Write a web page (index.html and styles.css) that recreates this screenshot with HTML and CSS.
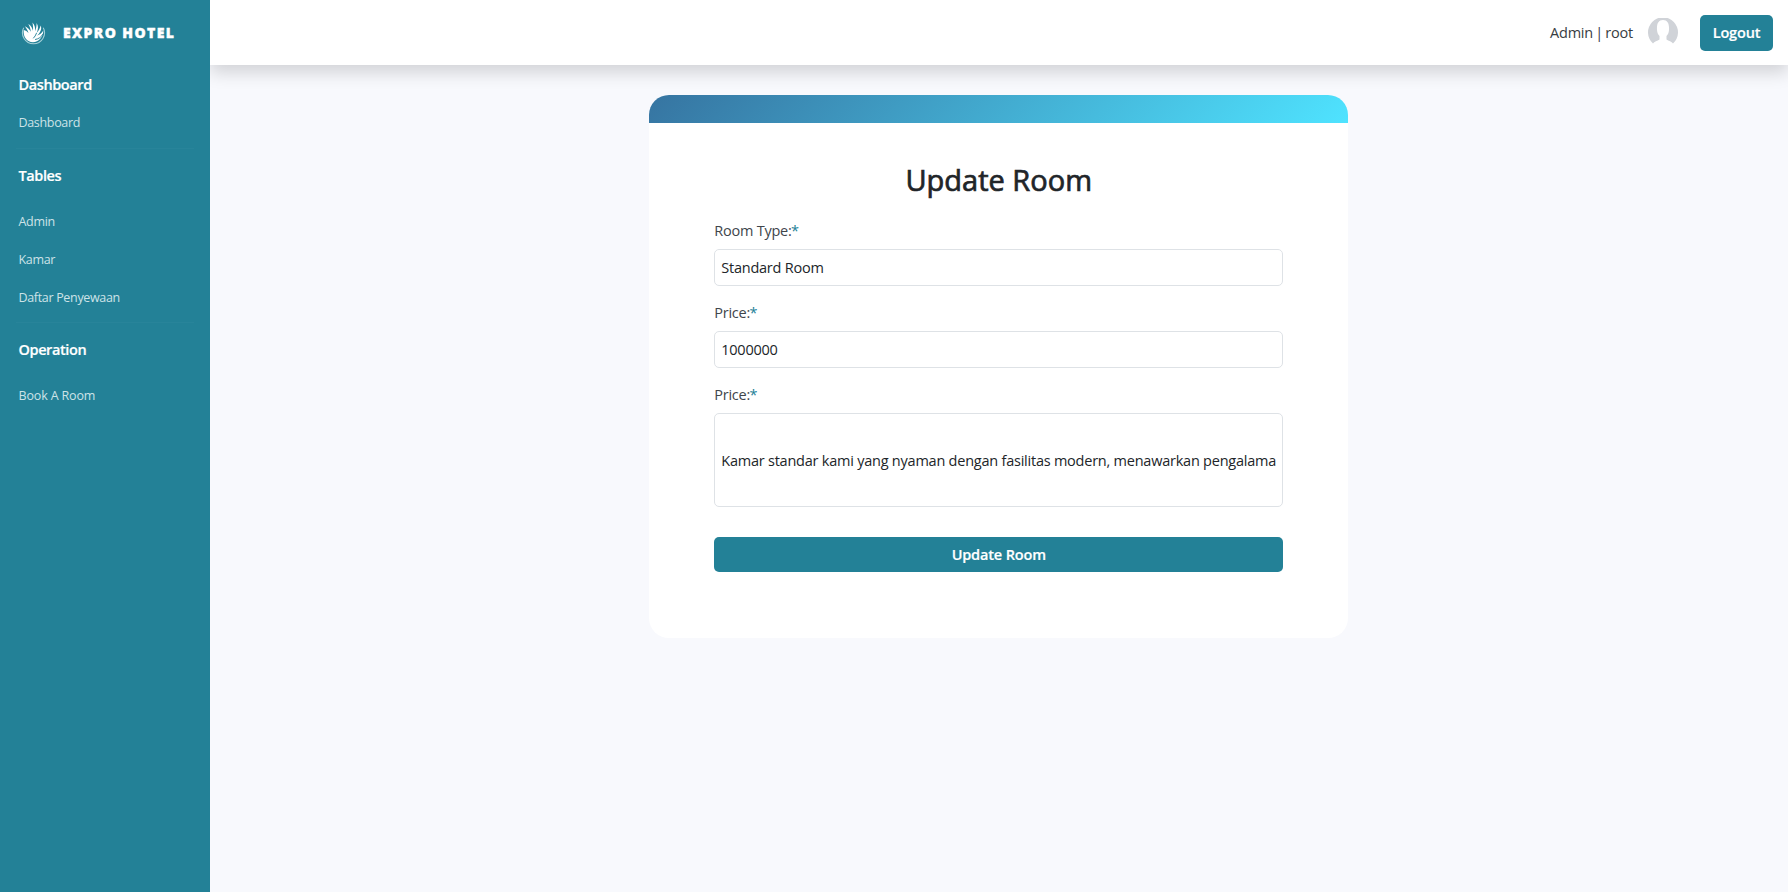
FILE: index.html
```html
<!DOCTYPE html>
<html lang="id">
<head>
<meta charset="utf-8">
<title>Expro Hotel</title>
<link rel="stylesheet" href="styles.css">
</head>
<body>
<aside class="sidebar">
  <div class="brand">
    <svg class="logo" viewBox="0 0 24 24" fill="#fff">
      <path d="M2.600 6.400A10.600 10.600 0 1 0 21.400 6.400" fill="none" stroke="#a5d0d8" stroke-width="1"/>
      <path d="M2.600 8.600C4.500 9 6 10 7.200 11.400C6.400 9 5.200 7 3.600 5C6.200 5.800 8.200 8 9.400 10.400C9.200 7.400 8.400 5 7 2.800C9.600 4.200 11 7 11.500 9.400C11.700 6.400 11.500 4 11 1.400C13.300 3.600 13.900 7 13.500 9.800C14.600 7.200 15 5 15 2C16.900 5 16.600 8.200 15 11.200C17 9.200 18.200 7 18.900 4.200C20.300 7.600 18.600 11 15.200 14.200C18 13.200 20 11.600 21.400 9.200C21.400 15.600 17 20.400 11.400 20.400C6 20.400 1.800 15.400 2.600 8.600Z"/>
      <path d="M21.500 12C19.600 15.400 17 17.200 13.500 17.800" fill="none" stroke="#238197" stroke-width=".9"/>
      <path d="M15 11.400C14.200 13.600 13.200 15.200 11.800 16.600" fill="none" stroke="#238197" stroke-width=".9"/>
    </svg>
    <span class="brand-name">EXPRO HOTEL</span>
  </div>
  <nav class="menu">
    <section class="group first">
      <h2>Dashboard</h2>
      <a>Dashboard</a>
    </section>
    <section class="group">
      <h2>Tables</h2>
      <a>Admin</a>
      <a>Kamar</a>
      <a>Daftar Penyewaan</a>
    </section>
    <section class="group">
      <h2>Operation</h2>
      <a class="wide">Book A Room</a>
    </section>
  </nav>
</aside>
<div class="page">
  <header class="topbar">
    <span class="user">Admin | root</span>
    <svg class="avatar" viewBox="0 0 30 26" fill="#d0d3d8">
      <path d="M5 25.500A15 15 0 1 1 25 25.500C23.800 23.600 20.500 22.800 18.500 21.500V18C20 16.500 20.800 14.500 21 12C21.400 5.500 19.500 2 15 2S8.600 5.500 9 12C9.200 14.500 10 16.500 11.500 18V21.500C9.500 22.800 6.200 23.600 5 25.500Z"/>
    </svg>
    <button class="btn logout">Logout</button>
  </header>
  <main class="content">
    <form class="card">
      <div class="strip"></div>
      <div class="card-body">
        <h1>Update Room</h1>
        <label class="label">Room Type:<b>*</b></label>
        <div class="field">Standard Room</div>
        <label class="label">Price:<b>*</b></label>
        <div class="field">1000000</div>
        <label class="label">Price:<b>*</b></label>
        <div class="field tall">Kamar standar kami yang nyaman dengan fasilitas modern, menawarkan pengalama</div>
        <button class="btn submit">Update Room</button>
      </div>
    </form>
  </main>
</div>
</body>
</html>
```
FILE: styles.css
```css
* { box-sizing: border-box; }
body {
  margin: 0;
  display: flex;
  height: 892px;
  overflow: hidden;
  background: #f8f9fd;
  font-family: "Open Sans", sans-serif;
  font-size: 14.5px;
  letter-spacing: -.23px;
  color: #212529;
}
h1, h2 { margin: 0; }
.sidebar {
  position: relative;
  z-index: 1;
  width: 209.5px;
  flex: none;
  background: #238197;
  color: #fff;
}
.brand {
  display: flex;
  align-items: center;
  height: 66px;
  padding-left: 21px;
  gap: 17px;
}
.logo { width: 25px; height: 25px; }
.brand-name {
  padding-bottom: 1px;
  font-size: 14px;
  font-weight: 800;
  letter-spacing: 1.4px;
  -webkit-text-stroke: .4px #fff;
}
.menu { padding: 0 16px 0 15.5px; }
.group {
  padding: 15px 3px 4.5px;
  border-top: 1px solid #28849a;
}
.group.first { padding: 7px 3px 5.5px; border-top: 0; }
.group h2 {
  margin-bottom: 15.5px;
  font-size: 14.5px;
  line-height: 24px;
  font-weight: 600;
  letter-spacing: -.4px;
  -webkit-text-stroke: .2px #fff;
}
.group.first h2 { margin-bottom: 7px; }
.group a {
  display: block;
  font-size: 12.5px;
  line-height: 38px;
  letter-spacing: -.33px;
  color: #cde3e8;
}
.group a.wide { letter-spacing: -.15px; }
.page { flex: 1; display: flex; flex-direction: column; }
.topbar {
  height: 65px;
  display: flex;
  align-items: center;
  justify-content: flex-end;
  padding-right: 15px;
  background: #fff;
  box-shadow: 0 8px 16px rgba(0, 0, 0, .15);
}
.user { color: #383d42; word-spacing: -1.2px; }
.avatar { width: 30px; height: 26px; margin: 0 22px 3px 15px; }
.btn {
  border: 0;
  border-radius: 5px;
  background: #238197;
  color: #fff;
  font: 600 14.5px "Open Sans", sans-serif;
  letter-spacing: -.15px;
  -webkit-text-stroke: .2px #fff;
  padding: 0;
}
.logout { width: 73px; height: 36px; }
.content { display: flex; justify-content: center; padding-top: 30px; }
.card {
  width: 699px;
  height: 543px;
  border-radius: 20px;
  overflow: hidden;
  background: #fff;
}
.strip { height: 28px; background: linear-gradient(135deg, #3674a1, #4fe3ff); }
.card-body { padding: 36px 65px 0; }
h1 {
  margin-bottom: 18px;
  font-size: 29px;
  line-height: 42px;
  font-weight: 400;
  letter-spacing: 0;
  -webkit-text-stroke: .7px #212529;
  text-align: center;
}
.label {
  display: block;
  line-height: 24px;
  margin-bottom: 6px;
  color: #40454b;
}
.label b { margin-left: -.5px; font-weight: 400; color: #238197; }
.field {
  display: flex;
  align-items: center;
  height: 37px;
  margin-bottom: 15px;
  padding: 0 6px;
  border: 1px solid #dee2e6;
  border-radius: 5px;
  white-space: nowrap;
}
.field.tall { height: 94px; margin-bottom: 30px; padding-top: 1px; }
.submit { display: block; width: 100%; height: 35px; }
```
